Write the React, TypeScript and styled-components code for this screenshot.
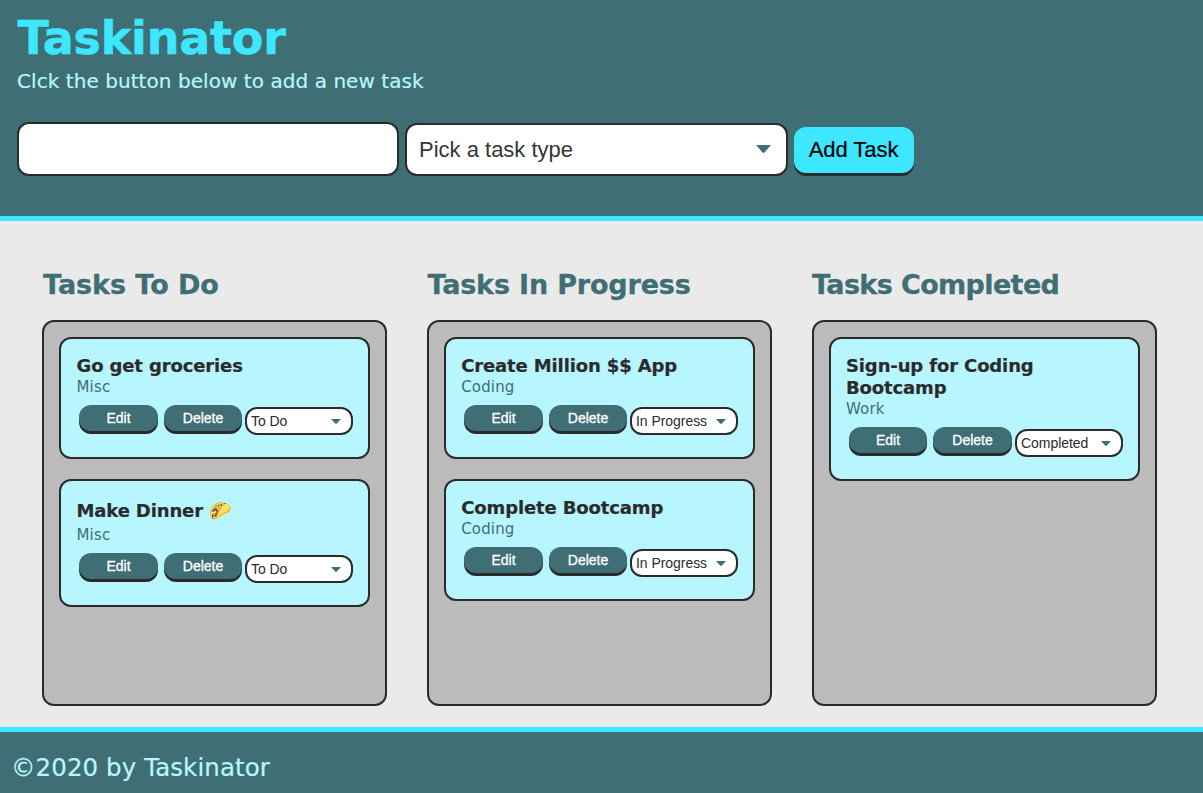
import React from "react";
import styled, { createGlobalStyle } from "styled-components";

const teal = "#3f6e74";
const cyan = "#3de7ff";
const pale = "#b8f6ff";
const ink = "#2b2b2b";

const GlobalStyle = createGlobalStyle`
  *, *::before, *::after { box-sizing: border-box; margin: 0; padding: 0; }
  body {
    margin: 0;
    background: #eaeaea;
    font-family: "DejaVu Sans", Verdana, sans-serif;
  }
`;

const Page = styled.div`
  display: flex;
  flex-direction: column;
  height: 793px;
  overflow: hidden;
`;

const Header = styled.header`
  height: 221px;
  padding: 10px 17px 0;
  background: ${teal};
  border-bottom: 5px solid ${cyan};
`;

const Title = styled.h1`
  padding-left: 0.5px;
  color: ${cyan};
  font-size: 46px;
  line-height: 56px;
  letter-spacing: -0.22px;
  -webkit-text-stroke: 0.5px ${cyan};
`;

const Subtitle = styled.p`
  margin: 3px 0 29px;
  color: ${pale};
  font-size: 20px;
  line-height: 24px;
  letter-spacing: 0.06px;
  -webkit-text-stroke: 0.2px ${pale};
`;

const TaskForm = styled.form`
  display: flex;
  align-items: flex-end;
  gap: 6px;
`;

const NameInput = styled.input`
  width: 382px;
  height: 54px;
  padding: 0 12px;
  border: 2px solid ${ink};
  border-radius: 12px;
  background: #fff;
  font: 22px "Liberation Sans", Arial, sans-serif;
  outline: none;
`;

const SelectWrap = styled.div<{ $small?: boolean }>`
  position: relative;
  width: ${(p) => (p.$small ? "108px" : "383px")};
  height: ${(p) => (p.$small ? "28px" : "53px")};
`;

const Select = styled.select<{ $small?: boolean }>`
  appearance: none;
  display: block;
  width: 100%;
  height: 100%;
  padding: 0 0 0 ${(p) => (p.$small ? "4px" : "12px")};
  border: 2px solid ${ink};
  border-radius: 12px;
  background: #fff;
  color: ${(p) => (p.$small ? ink : "#363636")};
  font: ${(p) => (p.$small ? "14px" : "22px")} "Liberation Sans", Arial, sans-serif;
  letter-spacing: ${(p) => (p.$small ? "-0.05px" : "0")};
  outline: none;
`;

const Arrow = styled.svg<{ $small?: boolean }>`
  position: absolute;
  pointer-events: none;
  fill: ${teal};
  width: ${(p) => (p.$small ? "10px" : "15px")};
  height: ${(p) => (p.$small ? "5px" : "8px")};
  right: ${(p) => (p.$small ? "12px" : "17px")};
  top: ${(p) => (p.$small ? "12px" : "22px")};
`;

const AddButton = styled.button`
  width: 120px;
  height: 46px;
  margin-bottom: 3px;
  padding-right: 1px;
  border: 0;
  border-radius: 12px;
  background: ${cyan};
  box-shadow: 0 3px 0 ${ink};
  color: #000;
  font: 22px "Liberation Sans", Arial, sans-serif;
  letter-spacing: -0.05px;
  -webkit-text-stroke: 0.2px #000;
`;

const Main = styled.main`
  display: flex;
  gap: 40px;
  height: 506px;
  padding: 48px 0 0 42px;
`;

const Column = styled.section`
  width: 345px;
`;

const ColumnTitle = styled.h2<{ $tracking: number; $indent: number }>`
  padding-left: ${(p) => p.$indent}px;
  margin-bottom: 19px;
  color: ${teal};
  font-size: 27px;
  line-height: 32px;
  white-space: nowrap;
  letter-spacing: ${(p) => p.$tracking}px;
  -webkit-text-stroke: 0.3px ${teal};
`;

const TaskList = styled.ul`
  display: flex;
  flex-direction: column;
  gap: 20px;
  height: 386px;
  padding: 15px;
  border: 2px solid ${ink};
  border-radius: 12px;
  background: #bbb;
  list-style: none;
`;

const Card = styled.li`
  padding: 16px 15px 22px;
  border: 2px solid ${ink};
  border-radius: 12px;
  background: ${pale};
`;

const TaskName = styled.h3<{ $tall?: boolean; $indent: number }>`
  padding-left: ${(p) => p.$indent}px;
  color: ${ink};
  font-size: 18px;
  line-height: ${(p) => (p.$tall ? "28px" : "22px")};
  letter-spacing: -0.13px;
  -webkit-text-stroke: 0.2px ${ink};
`;

const TaskType = styled.p<{ $indent: number }>`
  padding-left: ${(p) => p.$indent}px;
  color: ${teal};
  font-size: 15px;
  line-height: 20px;
  letter-spacing: 0.16px;
`;

const Actions = styled.div`
  display: flex;
  align-items: flex-start;
  margin: 8px 0 0 3px;
`;

const ActionButton = styled.button<{ $width: number; $gap: number }>`
  width: ${(p) => p.$width}px;
  height: 26px;
  margin-right: ${(p) => p.$gap}px;
  border: 0;
  border-radius: 12px;
  background: ${teal};
  box-shadow: 0 3px 0 ${ink};
  color: #fff;
  font: 14px "Liberation Sans", Arial, sans-serif;
  -webkit-text-stroke: 0.3px #fff;
`;

const StatusSlot = styled.div`
  margin-top: 2px;
`;

const Footer = styled.footer`
  flex: 1;
  padding: 21px 11px 0;
  border-top: 5px solid ${cyan};
  background: ${teal};
  color: ${pale};
  font-size: 24.5px;
  line-height: 30px;
  letter-spacing: 0.08px;
  -webkit-text-stroke: 0.2px ${pale};
`;

type Task = { name: string; type: string; emoji?: boolean };
type Board = { title: string; status: string; tracking: number; indent: number; editWidth: number; tasks: Task[] };

const boards: Board[] = [
  {
    title: "Tasks To Do",
    status: "To Do",
    tracking: -0.05,
    indent: 1,
    editWidth: 79,
    tasks: [
      { name: "Go get groceries", type: "Misc" },
      { name: "Make Dinner 🌮", type: "Misc", emoji: true },
    ],
  },
  {
    title: "Tasks In Progress",
    status: "In Progress",
    tracking: -0.17,
    indent: 0.4,
    editWidth: 79,
    tasks: [
      { name: "Create Million $$ App", type: "Coding" },
      { name: "Complete Bootcamp", type: "Coding" },
    ],
  },
  {
    title: "Tasks Completed",
    status: "Completed",
    tracking: -0.62,
    indent: 0,
    editWidth: 78,
    tasks: [{ name: "Sign-up for Coding Bootcamp", type: "Work" }],
  },
];

const statuses = ["To Do", "In Progress", "Completed"];

function DownArrow({ small }: { small?: boolean }) {
  return (
    <Arrow $small={small} viewBox="0 0 15 8" preserveAspectRatio="none" aria-hidden="true">
      <path d="M0 0H15L8.7 7.2Q7.5 8.6 6.3 7.2Z" />
    </Arrow>
  );
}

function TaskCard({ task, board }: { task: Task; board: Board }) {
  return (
    <Card>
      <TaskName $tall={task.emoji} $indent={board.indent / 2}>{task.name}</TaskName>
      <TaskType $indent={board.indent / 2}>{task.type}</TaskType>
      <Actions>
        <ActionButton $width={board.editWidth} $gap={6}>Edit</ActionButton>
        <ActionButton $width={157 - board.editWidth} $gap={3}>Delete</ActionButton>
        <StatusSlot>
          <SelectWrap $small>
            <Select $small defaultValue={board.status}>
              {statuses.map((s) => (
                <option key={s}>{s}</option>
              ))}
            </Select>
            <DownArrow small />
          </SelectWrap>
        </StatusSlot>
      </Actions>
    </Card>
  );
}

export default function App() {
  return (
    <Page>
      <GlobalStyle />
      <Header>
        <Title>Taskinator</Title>
        <Subtitle>Clck the button below to add a new task</Subtitle>
        <TaskForm onSubmit={(e) => e.preventDefault()}>
          <NameInput type="text" />
          <SelectWrap>
            <Select>
              <option>Pick a task type</option>
              <option>Misc</option>
              <option>Coding</option>
              <option>Work</option>
            </Select>
            <DownArrow />
          </SelectWrap>
          <AddButton type="submit">Add Task</AddButton>
        </TaskForm>
      </Header>
      <Main>
        {boards.map((b) => (
          <Column key={b.title}>
            <ColumnTitle $tracking={b.tracking} $indent={b.indent}>{b.title}</ColumnTitle>
            <TaskList>
              {b.tasks.map((t) => (
                <TaskCard key={t.name} task={t} board={b} />
              ))}
            </TaskList>
          </Column>
        ))}
      </Main>
      <Footer>©2020 by Taskinator</Footer>
    </Page>
  );
}
